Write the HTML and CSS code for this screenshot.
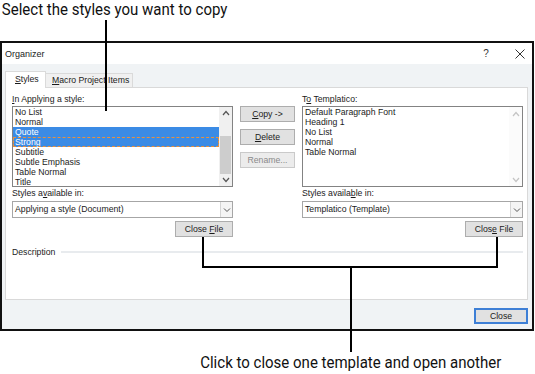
FILE: index.html
```html
<!DOCTYPE html>
<html lang="en">
<head>
    <meta charset="UTF-8">
    <title>Organizer</title>
    <link rel="stylesheet" href="styles.css">
</head>
<body>
    <div class="page">
        <p class="callout callout-top">Select the styles you want to copy</p>

        <div class="dialog">
            <div class="titlebar">
                <span class="title">Organizer</span>
                <span class="title-btn help">?</span>
                <span class="title-btn close">
                    <svg width="10" height="10" viewBox="0 0 10 10"><path d="M0.5 0.5 L9.5 9.5 M9.5 0.5 L0.5 9.5" stroke="#333" stroke-width="1" fill="none"/></svg>
                </span>
            </div>

            <div class="dialog-body">
                <div class="tabs">
                    <div class="tab active"><u>S</u>tyles</div>
                    <div class="tab macro"><u>M</u>acro Project Items</div>
                </div>

                <div class="tab-panel">
                    <div class="organizer">
                        <!-- Left: source document -->
                        <div class="column">
                            <div class="label"><u>I</u>n Applying a style:</div>
                            <div class="listbox">
                                <ul class="items">
                                    <li>No List</li>
                                    <li>Normal</li>
                                    <li class="selected">Quote</li>
                                    <li class="selected focused">Strong</li>
                                    <li>Subtitle</li>
                                    <li>Subtle Emphasis</li>
                                    <li>Table Normal</li>
                                    <li>Title</li>
                                </ul>
                                <div class="scrollbar">
                                    <div class="sb-btn"><svg width="8" height="6" viewBox="0 0 8 6"><polyline points="1,5 4,1.5 7,5" fill="none" stroke="#555" stroke-width="1.2"/></svg></div>
                                    <div class="sb-track"><div class="sb-thumb"></div></div>
                                    <div class="sb-btn"><svg width="8" height="6" viewBox="0 0 8 6"><polyline points="1,1 4,4.5 7,1" fill="none" stroke="#555" stroke-width="1.2"/></svg></div>
                                </div>
                            </div>
                            <div class="label second">Styles a<u>v</u>ailable in:</div>
                            <div class="combo">
                                <span class="combo-text">Applying a style (Document)</span>
                                <span class="combo-arrow"><svg width="8" height="6" viewBox="0 0 8 6"><polyline points="1,1.5 4,4.5 7,1.5" fill="none" stroke="#555" stroke-width="1"/></svg></span>
                            </div>
                            <button class="btn close-file">Close <u>F</u>ile</button>
                        </div>

                        <!-- Middle: actions -->
                        <div class="actions">
                            <button class="btn"><u>C</u>opy -&gt;</button>
                            <button class="btn"><u>D</u>elete</button>
                            <button class="btn disabled">Rename...</button>
                        </div>

                        <!-- Right: target template -->
                        <div class="column">
                            <div class="label">T<u>o</u> Templatico:</div>
                            <div class="listbox">
                                <ul class="items">
                                    <li>Default Paragraph Font</li>
                                    <li>Heading 1</li>
                                    <li>No List</li>
                                    <li>Normal</li>
                                    <li>Table Normal</li>
                                </ul>
                                <div class="scrollbar inactive">
                                    <div class="sb-btn"><svg width="8" height="6" viewBox="0 0 8 6"><polyline points="1,5 4,1.5 7,5" fill="none" stroke="#c4c4c4" stroke-width="1.2"/></svg></div>
                                    <div class="sb-track"></div>
                                    <div class="sb-btn"><svg width="8" height="6" viewBox="0 0 8 6"><polyline points="1,1 4,4.5 7,1" fill="none" stroke="#c4c4c4" stroke-width="1.2"/></svg></div>
                                </div>
                            </div>
                            <div class="label second">Styles availa<u>b</u>le in:</div>
                            <div class="combo">
                                <span class="combo-text">Templatico (Template)</span>
                                <span class="combo-arrow"><svg width="8" height="6" viewBox="0 0 8 6"><polyline points="1,1.5 4,4.5 7,1.5" fill="none" stroke="#555" stroke-width="1"/></svg></span>
                            </div>
                            <button class="btn close-file">Clos<u>e</u> File</button>
                        </div>
                    </div>

                    <div class="description">
                        <span>Description</span>
                        <span class="rule"></span>
                    </div>
                </div>

                <div class="footer">
                    <button class="btn default">Close</button>
                </div>
            </div>
        </div>

        <p class="callout callout-bottom">Click to close one template and open another</p>

        <!-- leader lines -->
        <div class="leader top-line"></div>
        <div class="leader left-drop"></div>
        <div class="leader right-drop"></div>
        <div class="leader joiner"></div>
        <div class="leader center-drop"></div>
    </div>
</body>
</html>
```

FILE: styles.css
```css
* {
    box-sizing: border-box;
}

body {
    margin: 0;
    background: #fff;
    font-family: "Liberation Sans", Arial, sans-serif;
    color: #1b1b1b;
}

.page {
    position: relative;
    width: 535px;
    height: 374px;
    overflow: hidden;
}

/* Callout captions (condensed look) */
.callout {
    margin: 0;
    font-family: Roboto, "Liberation Sans", sans-serif;
    font-size: 16.5px;
    line-height: 20px;
    height: 20px;
    color: #111;
    white-space: nowrap;
    transform: scaleX(0.91);
    transform-origin: left center;
}

.callout-top {
    padding-left: 2px;
}

.callout-bottom {
    margin-top: 22px;
    padding-left: 220px;
}

/* Dialog frame */
.dialog {
    margin-top: 21px;
    width: 534px;
    height: 290px;
    border: 2px solid #111;
    background: #f0f3f5;
}

.titlebar {
    height: 21px;
    background: #fff;
    display: flex;
    align-items: center;
    padding-left: 3px;
    font-size: 9px;
}

.title {
    flex: 1;
}

.title-btn {
    width: 24px;
    display: flex;
    justify-content: center;
    align-items: center;
    font-size: 10px;
    color: #333;
}

.title-btn.help {
    margin-right: 10px;
}

.dialog-body {
    height: 265px;
    padding: 7px 4px 0 3px;
    display: flex;
    flex-direction: column;
    font-size: 8.7px;
}

/* Tabs */
.tabs {
    display: flex;
    align-items: flex-end;
    height: 16px;
}

.tab {
    height: 14px;
    line-height: 12px;
    border: 1px solid #dadada;
    border-bottom: none;
    background: #f0f0f0;
    white-space: nowrap;
}

.tab.active {
    width: 41px;
    height: 17px;
    line-height: 15px;
    padding-left: 9px;
    margin-bottom: -1px;
    background: #fff;
    position: relative;
    z-index: 1;
}

.tab.macro {
    width: 87px;
    padding-left: 6px;
    border-left: none;
}

.tab-panel {
    height: 213px;
    border: 1px solid #d9d9d9;
    background: #fff;
    padding: 5px 4px 0 6px;
}

.organizer {
    display: grid;
    grid-template-columns: 221px 55px 221px;
    column-gap: 7px;
}

.column {
    display: flex;
    flex-direction: column;
}

.label {
    height: 12px;
    line-height: 12px;
}

/* List boxes */
.listbox {
    margin-top: 1px;
    height: 81px;
    border: 1px solid #838383;
    display: flex;
}

.items {
    flex: 1;
    list-style: none;
    margin: 0;
    padding: 0;
}

.items li {
    height: 10px;
    line-height: 10px;
    padding-left: 2px;
    white-space: nowrap;
}

.items li.selected {
    background: #3b8be5;
    color: #fff;
}

.items li.focused {
    outline: 1px dashed #e8903c;
    outline-offset: -1px;
}

.scrollbar {
    width: 13px;
    background: #f0f0f0;
    display: flex;
    flex-direction: column;
}

.scrollbar.inactive {
    background: #fbfbfb;
}

.sb-btn {
    height: 13px;
    display: flex;
    align-items: center;
    justify-content: center;
}

.sb-track {
    flex: 1;
}

.sb-thumb {
    margin: 17px 1px 0;
    height: 38px;
    background: #cdcdcd;
}

/* Combo boxes */
.combo {
    margin-top: 2px;
    height: 17px;
    border: 1px solid #a6a6a6;
    background: #fff;
    display: flex;
}

.combo-text {
    flex: 1;
    padding-left: 2px;
    line-height: 15px;
}

.combo-arrow {
    width: 12px;
    border-left: 1px solid #d4d4d4;
    background: #f4f4f4;
    display: flex;
    align-items: center;
    justify-content: center;
}

/* Buttons */
.btn {
    font-family: inherit;
    font-size: 8.7px;
    height: 16px;
    padding: 0;
    line-height: 14px;
    color: #1b1b1b;
    background: #e1e1e1;
    border: 1px solid #adadad;
}

.btn.disabled {
    color: #8a8a8a;
    background: #ececec;
    border-color: #cacaca;
}

.close-file {
    margin-top: 3px;
    align-self: flex-end;
    width: 58px;
}

.actions {
    padding-top: 13px;
    display: flex;
    flex-direction: column;
    gap: 7px;
}

.description {
    margin-top: 9px;
    height: 12px;
    display: flex;
    align-items: center;
}

.description .rule {
    flex: 1;
    height: 2px;
    margin-left: 6px;
    background: #e8ebee;
}

.footer {
    flex: 1;
    display: flex;
    justify-content: flex-end;
    padding-top: 8px;
}

.btn.default {
    width: 54px;
    border: 2px solid #3d7fd6;
    line-height: 12px;
}

/* Leader lines of the callouts */
.leader {
    position: absolute;
    background: #000;
}

.top-line {
    left: 105px;
    top: 20px;
    width: 1.5px;
    height: 91px;
}

.left-drop {
    left: 202px;
    top: 237px;
    width: 1.5px;
    height: 31px;
}

.right-drop {
    left: 496px;
    top: 237px;
    width: 1.5px;
    height: 31px;
}

.joiner {
    left: 202px;
    top: 266px;
    width: 295.5px;
    height: 1.5px;
}

.center-drop {
    left: 350px;
    top: 266px;
    width: 1.5px;
    height: 86px;
}
```
